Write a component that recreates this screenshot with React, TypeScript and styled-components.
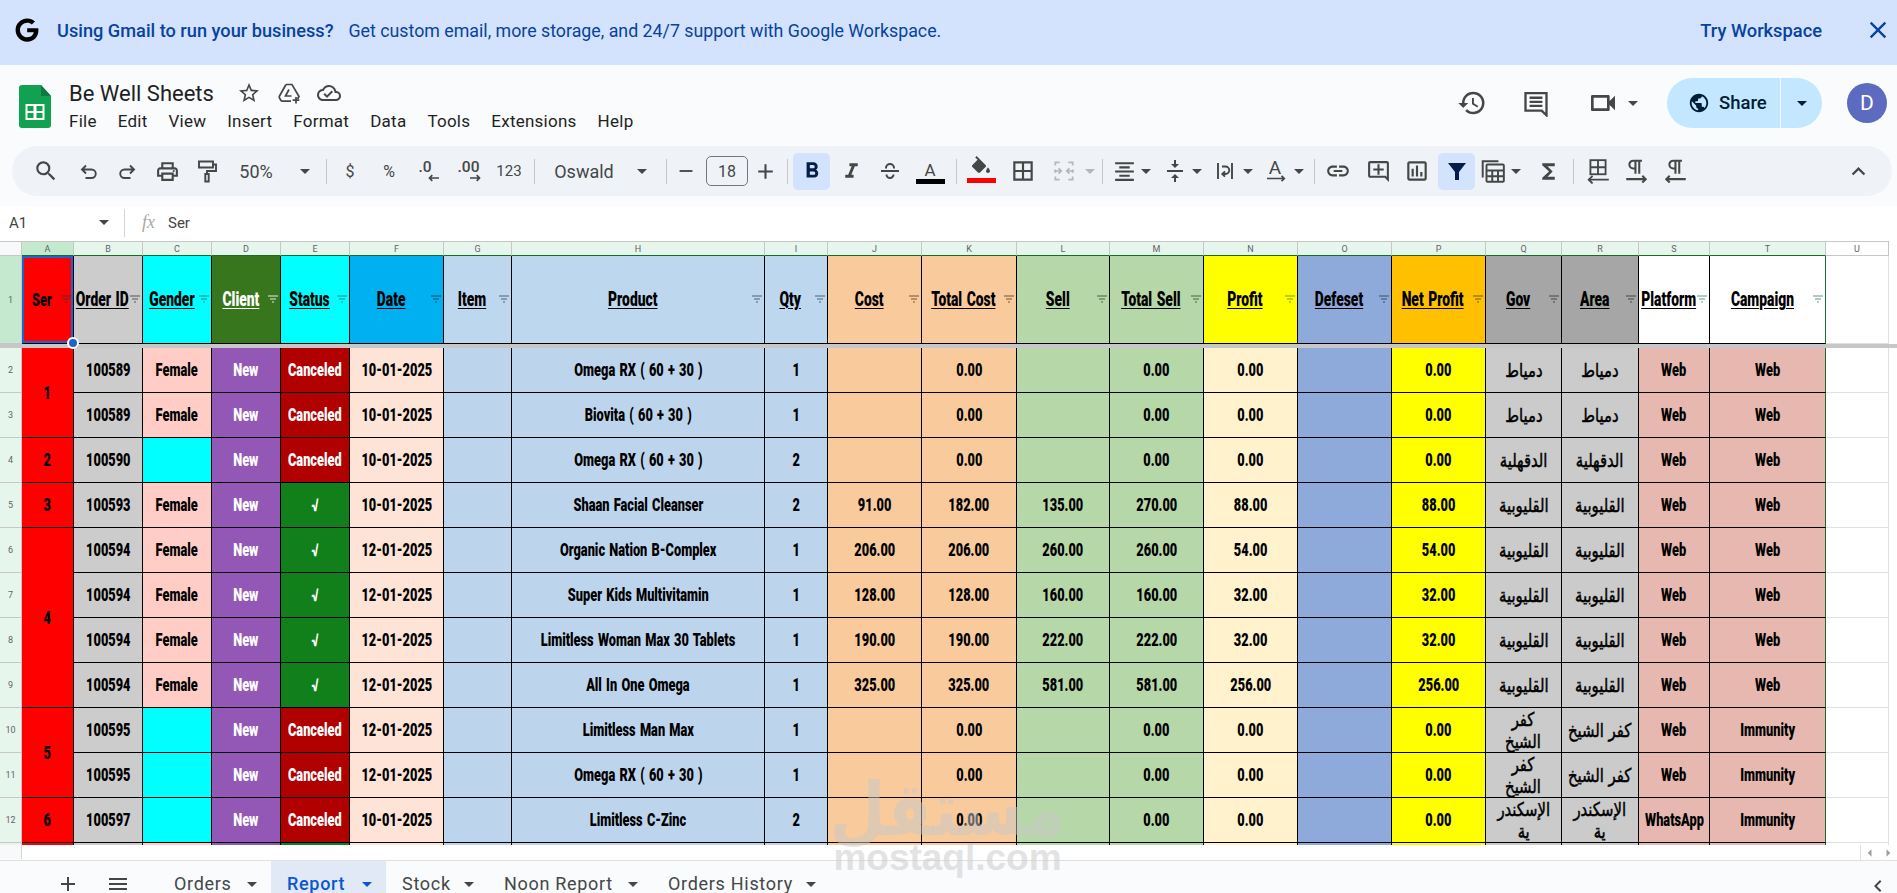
import React from "react";
import styled, { createGlobalStyle } from "styled-components";
import { FaGoogle } from "react-icons/fa";
import {
  MdAdd, MdMenu, MdClose, MdSearch, MdOutlinePrint,
  MdRemove, MdFormatBold, MdFormatItalic, MdBorderAll, MdFormatAlignCenter,
  MdVerticalAlignCenter, MdLink, MdOutlineAddComment, MdOutlineInsertChart, MdFunctions,
  MdExpandLess, MdStarBorder,
  MdOutlineCloudDone, MdHistory, MdOutlineVideocam, MdPublic,
  MdChevronLeft, MdArrowLeft, MdArrowRight,
} from "react-icons/md";

const Global = createGlobalStyle`
  html, body { margin: 0; padding: 0; width: 1897px; height: 893px; overflow: hidden; background: #fff; }
  * { box-sizing: border-box; }
`;

const UI = `Roboto, "Liberation Sans", sans-serif`;

const Page = styled.div`
  position: relative; width: 1897px; height: 893px; overflow: hidden;
  display: flex; flex-direction: column; background: #f9fbfd; font-family: ${UI}; color: #444746;
`;

/* banner */
const Banner = styled.div`
  height: 65px; flex: none; background: #d3e3fd; color: #0842a0; display: flex; align-items: center;
  padding: 0 10px 5px 15px; font-size: 17.8px;
`;
const BannerLead = styled.span` margin-left: 18px; font-size: 18.2px; font-weight: 500; `;
const BannerRest = styled.span` margin-left: 15px; `;
const BannerCta = styled.span` margin-left: auto; font-size: 18.3px; font-weight: 500; `;
const BannerClose = styled.span` display: flex; margin-left: 42px; margin-right: -5px; `;

/* header */
const Header = styled.div` height: 81px; flex: none; display: flex; padding: 20px 10px 0 19px; `;
const TitleBlock = styled.div` margin-left: 18px; margin-top: -5px; display: flex; flex-direction: column; `;
const TitleRow = styled.div` display: flex; align-items: center; height: 26px; color: #444746; `;
const DocTitle = styled.span` font-size: 22px; color: #1f1f1f; width: 146px; white-space: nowrap; `;
const TitleIcon = styled.span<{ $ml: number }>` display: flex; margin-left: ${(p) => p.$ml}px; `;
const Menu = styled.div` display: flex; gap: 21px; margin-top: 5px; font-size: 17px; color: #1f1f1f; letter-spacing: .25px; `;
const HeaderRight = styled.div` margin-left: auto; margin-top: -7px; height: 50px; display: flex; align-items: center; `;
const HeadIcon = styled.span<{ $ml: number }>` display: flex; margin-left: ${(p) => p.$ml}px; color: #444746; `;
const Share = styled.div`
  margin-left: 29px; width: 155px; height: 50px; border-radius: 25px; background: #c2e7ff; color: #001d35;
  display: flex; align-items: center; font-size: 18.5px; font-weight: 500;
`;
const ShareMain = styled.div` width: 114px; height: 100%; display: flex; align-items: center; gap: 9px; padding-left: 21px; border-right: 1px solid #f3faff; `;
const Avatar = styled.div`
  margin-left: 25px; width: 40px; height: 40px; border-radius: 50%; background: #5c6bc0; color: #fff;
  display: flex; align-items: center; justify-content: center; font-size: 21px;
`;
const Caret = styled.span<{ $c?: string; $s?: number }>`
  display: inline-block; flex: none; width: 0; height: 0;
  border-left: ${(p) => p.$s ?? 5}px solid transparent; border-right: ${(p) => p.$s ?? 5}px solid transparent;
  border-top: ${(p) => p.$s ?? 5}px solid ${(p) => p.$c ?? "#444746"};
`;

/* toolbar */
const ToolbarWrap = styled.div` height: 60px; flex: none; padding: 0 5px 10px 12px; `;
const Toolbar = styled.div` height: 50px; border-radius: 25px; background: #eff3f8; display: flex; align-items: center; `;
const Tool = styled.div<{ $w: number; $ml: number; $on?: boolean; $text?: number }>`
  flex: none; position: relative; width: ${(p) => p.$w}px; height: 37px; margin-left: ${(p) => p.$ml}px;
  display: flex; flex-direction: column; align-items: center; justify-content: center; border-radius: 5px;
  color: ${(p) => (p.$on ? "#041e49" : "#444746")}; background: ${(p) => (p.$on ? "#d3e3fd" : "transparent")};
  font-size: ${(p) => p.$text ?? 16}px; white-space: nowrap;
`;
const Sep = styled.div` width: 1px; height: 25px; background: #c7c7c7; `;
const SizeBox = styled.div` width: 42px; height: 30px; border: 1px solid #747775; border-radius: 5px; display: flex; align-items: center; justify-content: center; font-size: 16px; color: #444746; `;
const ColorBar = styled.div<{ $c: string }>` width: 29px; height: 5px; margin-top: -1px; background: ${(p) => p.$c}; `;
const GlyphA = styled.span` font-size: 17px; line-height: 19px; margin-top: 3px; `;
const FillSvg = styled.svg` margin-top: -4px; `;
const LogoSvg = styled.svg` flex: none; `;

/* formula bar */
const FormulaBar = styled.div` height: 35px; flex: none; background: #fff; display: flex; align-items: center; padding: 0 0 2px 9px; font-size: 15px; color: #444; `;
const NameBox = styled.div` width: 116px; height: 28px; display: flex; align-items: center; justify-content: space-between; padding-right: 15px; border-right: 1px solid #d5d5d5; `;
const Fx = styled.span` margin-left: 17px; font: italic 18px "Liberation Serif", serif; color: #a8a8a8; `;
const FormulaText = styled.span` margin-left: 13px; `;

/* sheet */
const Sheet = styled.div`
  height: 604px; flex: none; background: #fff; overflow: hidden; display: grid;
  grid-template-columns: 22px 52px 69px 69px 69px 69px 94px 68px 253px 63px 94px 95px 93px 94px 94px 94px 94px 76px 77px 71px 116px 63px 1fr;
  grid-template-rows: 15px 88px 4px repeat(12, 45px);
`;
const Corner = styled.div` background: #f8f9fa; border-top: 1px solid #c7c7c7; border-right: 1px solid #c7c7c7; border-bottom: 1px solid #c7c7c7; `;
const ColHead = styled.div<{ $on?: boolean; $plain?: boolean }>`
  background: ${(p) => (p.$plain ? "#fff" : p.$on ? "#c4e9cf" : "#e7f6ec")};
  border-top: 1px solid #c7c7c7; border-right: 1px solid #c7c7c7;
  border-bottom: 1px solid ${(p) => (p.$plain ? "#c7c7c7" : "#146c2e")};
  display: flex; align-items: center; justify-content: center;
  font: 9px ${UI}; color: #5f6368;
`;
const RowHead = styled.div<{ $on?: boolean }>`
  background: ${(p) => (p.$on ? "#c4e9cf" : "#e7f6ec")}; border-right: 1px solid #c7c7c7; border-bottom: 1px solid #c7c7c7;
  display: flex; align-items: center; justify-content: center; font: 9px ${UI}; color: #5f6368;
`;
const Band = styled.div` grid-column: 1 / -1; background: #c7c7c7; `;
const Cell = styled.div<{ $bg: string; $fg?: string; $edge?: boolean; $span?: number; $head?: boolean; $sel?: boolean }>`
  position: relative; background: ${(p) => p.$bg}; color: ${(p) => p.$fg ?? "#000"};
  border-right: 1px solid ${(p) => (p.$edge ? "#146c2e" : "#000")};
  border-bottom: 1px solid #000;
  grid-row: span ${(p) => p.$span ?? 1};
  display: flex; align-items: center; justify-content: center;
  padding: ${(p) => (p.$head ? "1px 11px 0 0" : "0")};
  box-shadow: ${(p) => (p.$sel ? "inset 0 0 0 2px #1a66d0" : "none")};
  z-index: ${(p) => (p.$sel ? 2 : 0)};
`;
const Blank = styled.div` border-right: 1px solid #e0e0e0; border-bottom: 1px solid #e0e0e0; background: #fff; `;
const Filler = styled.div` background: #fff; `;
const Txt = styled.span<{ $u?: boolean }>`
  display: inline-block; flex: none; font: 900 ${(p) => (p.$u ? 19.5 : 18)}px/20px Roboto, sans-serif; white-space: nowrap;
  word-spacing: 1.5px; transform: scaleX(.71); text-decoration: ${(p) => (p.$u ? "underline" : "none")}; text-underline-offset: 2px;
`;
const Arabic = styled.span`
  display: inline-block; flex: none; direction: rtl; text-align: center; white-space: pre-line;
  font: 400 19px/22px "DejaVu Sans", sans-serif; transform: scaleX(.78); -webkit-text-stroke: .5px #000;
`;
const FilterMark = styled.svg` position: absolute; right: 2px; top: 39px; width: 10px; height: 8px; `;
const Handle = styled.div`
  position: absolute; right: -6px; bottom: -6px; width: 12px; height: 12px; border-radius: 50%;
  background: #1a66d0; border: 2px solid #fff;
`;

/* scroll strip + tabs */
const Strip = styled.div` height: 16px; flex: none; background: #fff; display: flex; justify-content: space-between; border-bottom: 1px solid #e0e0e0; `;
const StripGutter = styled.div` width: 22px; height: 14px; border-right: 1px solid #d5d5d5; background: #f8f9fa; `;
const StripArrows = styled.div` width: 37px; display: flex; align-items: center; border-left: 1px solid #e0e0e0; color: #9aa0a6; `;
const TabBar = styled.div` height: 32px; flex: none; overflow: hidden; display: flex; align-items: flex-start; background: #f9fbfd; padding-left: 43px; `;
const TabTool = styled.span<{ $w: number }>` flex: none; width: ${(p) => p.$w}px; display: flex; justify-content: center; padding-top: 11px; color: #444746; `;
const Tab = styled.div<{ $w: number; $on?: boolean; $ml?: number }>`
  flex: none; width: ${(p) => p.$w}px; height: 32px; margin-left: ${(p) => p.$ml ?? 0}px; padding: 12px 14px 0 16px; display: flex; justify-content: space-between;
  background: ${(p) => (p.$on ? "#e1e9f7" : "transparent")}; color: ${(p) => (p.$on ? "#0b57d0" : "#444746")};
  font-size: 18px; line-height: 22px; font-weight: ${(p) => (p.$on ? 500 : 400)}; letter-spacing: .7px;
  white-space: nowrap;
`;
const TabCaret = styled.span` display: flex; align-items: center; height: 22px; `;
const SideCollapse = styled.span` margin-left: auto; margin-right: 7px; padding-top: 13px; display: flex; color: #444746; `;

/* watermark */
const Watermark = styled.div`
  position: absolute; left: 833px; top: 769px; width: 229px; display: flex; flex-direction: column; align-items: center;
  color: rgba(200, 200, 200, .5); pointer-events: none; z-index: 5;
`;
const WatermarkAr = styled.span` font: 700 74px/80px "DejaVu Sans", sans-serif; white-space: nowrap; transform: scaleX(.87); `;
const WatermarkEn = styled.span` font: 700 37px/40px "Liberation Sans", sans-serif; margin-top: -11px; `;

/* small drawings */
const S = (p: { children: React.ReactNode; size?: number; sw?: number; c?: string }) => (
  <svg width={p.size ?? 24} height={p.size ?? 24} viewBox="0 0 24 24" fill="none" stroke={p.c ?? "currentColor"} strokeWidth={p.sw ?? 2}>
    {p.children}
  </svg>
);
const SheetsLogo = () => (
  <LogoSvg width="32" height="43" viewBox="0 0 32 43">
    <path d="M3 0h19l10 11v29a3 3 0 0 1-3 3H3a3 3 0 0 1-3-3V3a3 3 0 0 1 3-3z" fill="#12a150" />
    <path d="M22 0l10 11H22z" fill="#0c7a3c" />
    <rect x="6.5" y="19" width="19" height="16" fill="#fff" />
    <path d="M8.5 21h6v5h-6zM17.500 21h6v5h-6zM8.500 28h6v5h-6zM17.500 28h6v5h-6z" fill="#12a150" />
  </LogoSvg>
);
const CommentIcon = () => (
  <S size={28}>
    <path d="M3 3.5h18v19l-4.2-4H3z" />
    <path d="M6.5 7.5h11M6.5 11h11M6.5 14.5h11" />
  </S>
);
const DriveAddIcon = () => (
  <S sw={1.7}>
    <path d="M9 3.500h6l7 12-1.500 2.500M9 3.500 2.500 15a2 2 0 0 0 0 2l1.500 2.500a1.500 1.500 0 0 0 1.300.700H14" />
    <path d="M12 8.500 8.500 15h6" />
    <path d="M19 16v6.500M15.700 19.200h6.600" />
  </S>
);
const UndoIcon = () => (
  <S sw={1.9}><path d="M9 6.500 5 10.500l4 4M5 10.500h9.500a4.250 4.250 0 0 1 0 8.500H8.500" /></S>
);
const RedoIcon = () => (
  <S sw={1.9}><path d="M15 6.500l4 4-4 4M19 10.500H9.500a4.250 4.250 0 0 0 0 8.500H15.500" /></S>
);
const PaintIcon = () => (
  <S sw={1.9}>
    <path d="M4 2.500h14v6H4z" />
    <path d="M18 5.500h3v6.500h-9v3" />
    <path d="M10.300 15h3.400v7.500h-3.400z" />
  </S>
);
const StrikeIcon = () => (
  <S sw={2}>
    <path d="M3 12h18" />
    <path d="M8 9.500V9a4 4 0 0 1 8 0v.500" />
    <path d="M8.500 15.500a3.500 3.500 0 0 0 7 0" />
  </S>
);
const DecIcon = (p: { label: string; tx: number; dir: "l" | "r" }) => (
  <svg width="30" height="28" viewBox="0 0 30 28">
    <text x={p.tx} y="15" textAnchor="middle" fontFamily="Roboto, sans-serif" fontWeight="500" fontSize="15.500" fill="currentColor">{p.label}</text>
    {p.dir === "l"
      ? <path d="M24 21h-9.500m2.800-2.800-2.800 2.800 2.800 2.800" fill="none" stroke="currentColor" strokeWidth="1.7" />
      : <path d="M15 21h9.500m-2.800-2.800 2.800 2.800-2.800 2.800" fill="none" stroke="currentColor" strokeWidth="1.7" />}
  </svg>
);
const MergeIcon = () => (
  <S sw={1.6} c="#b3b7bb" size={26}>
    <path d="M8 4H4v3M4 10.500v3M4 17v3h4M16 4h4v3M20 10.500v3M20 17v3h-4" />
    <path d="M3 12h6.500M7 9.500 9.500 12 7 14.500M21 12h-6.500M17 9.500 14.500 12l2.500 2.500" />
  </S>
);
const WrapIcon = () => (
  <S sw={1.9}>
    <path d="M5 4v16M19 4v16" />
    <path d="M9 7.500h3.500a3.500 3.500 0 0 1 0 7.500H9.500M12 12.300 9.300 15l2.700 2.700" />
  </S>
);
const RotateIcon = () => (
  <svg width="26" height="26" viewBox="0 0 26 26">
    <text x="11" y="16" textAnchor="middle" fontFamily="Roboto, sans-serif" fontSize="19" fill="currentColor">A</text>
    <path d="M3 20.500h17M17.500 17.800l2.800 2.700-2.800 2.700" fill="none" stroke="currentColor" strokeWidth="1.7" />
  </svg>
);
const FillIcon = () => (
  <FillSvg width="24" height="24" viewBox="0 0 24 22" fill="currentColor">
    <path d="M16.560 8.940 7.620 0 6.210 1.410l2.380 2.380-5.150 5.150c-.59.590-.59 1.540 0 2.120l5.500 5.500c.29.290.68.440 1.060.440s.77-.150 1.060-.440l5.500-5.500c.59-.580.59-1.530 0-2.120zM19 11.500s-2 2.170-2 3.500c0 1.100.9 2 2 2s2-.9 2-2c0-1.330-2-3.500-2-3.500z" />
  </FillSvg>
);
const FunnelIcon = () => (
  <svg width="24" height="24" viewBox="0 0 24 24" fill="#041e49"><path d="M3 4h18l-7 9v8h-4v-8z" /></svg>
);
const CalcIcon = () => (
  <S sw={1.8} size={26}>
    <path d="M2.500 18V3H17" />
    <rect x="6" y="6" width="16" height="16" rx="1" />
    <path d="M6 11.500h16M6 16.800h16M11.300 11.500V22M16.600 11.500V22" />
  </S>
);
const TableArrowIcon = () => (
  <S sw={1.7} size={26}>
    <rect x="5" y="2" width="14" height="13" />
    <path d="M12 2v13M5 8.500h14M22 20H3M7 16.500 3.400 20 7 23.500" />
  </S>
);
const PilcrowRight = () => (
  <S sw={1.9} size={26}>
    <path d="M11.500 2.500v12M15 2.500v12M17.500 2.500h-8a3.600 3.600 0 0 0 0 7.200h2" />
    <path d="M3 19.500h18M17.800 16.300l3.200 3.200-3.200 3.200" />
  </S>
);
const PilcrowLeft = () => (
  <S sw={1.9} size={26}>
    <path d="M11.500 2.500v12M15 2.500v12M17.500 2.500h-8a3.600 3.600 0 0 0 0 7.200h2" />
    <path d="M21 19.500H3M6.200 16.300 3 19.500l3.200 3.200" />
  </S>
);
const FilterLines = (p: { c: string }) => (
  <FilterMark viewBox="0 0 10 8"><path d="M0 1h10M2 4h6M4 7h2" stroke={p.c} strokeWidth="1" /></FilterMark>
);

/* toolbar data: c = centre x of the tool on the page */
type T = { c: number; w?: number; el?: React.ReactNode; on?: boolean; text?: number };
const car = <Caret />;
const tools: T[] = [
  { c: 46, el: <MdSearch size={26} /> },
  { c: 89, el: <UndoIcon /> },
  { c: 127, el: <RedoIcon /> },
  { c: 167, el: <MdOutlinePrint size={25} /> },
  { c: 207, el: <PaintIcon /> },
  { c: 256, w: 40, el: "50%", text: 18 },
  { c: 305, w: 14, el: car },
  { c: 326, w: 1, el: <Sep /> },
  { c: 350, el: "$", text: 16 },
  { c: 389, el: "%", text: 16 },
  { c: 430, el: <DecIcon label=".0" tx={10} dir="l" /> },
  { c: 470, el: <DecIcon label=".00" tx={13.5} dir="r" /> },
  { c: 509, el: "123", text: 15 },
  { c: 534, w: 1, el: <Sep /> },
  { c: 584, w: 64, el: "Oswald", text: 18 },
  { c: 642, w: 14, el: car },
  { c: 666, w: 1, el: <Sep /> },
  { c: 686, w: 24, el: <MdRemove size={22} /> },
  { c: 727, w: 42, el: <SizeBox>18</SizeBox> },
  { c: 765, el: <MdAdd size={25} /> },
  { c: 787, w: 1, el: <Sep /> },
  { c: 811.5, w: 37, el: <MdFormatBold size={26} />, on: true },
  { c: 851, el: <MdFormatItalic size={25} /> },
  { c: 890, el: <StrikeIcon /> },
  { c: 930, el: <><GlyphA>A</GlyphA><ColorBar $c="#000" /></> },
  { c: 956, w: 1, el: <Sep /> },
  { c: 981, el: <><FillIcon /><ColorBar $c="#f00" /></> },
  { c: 1023, el: <MdBorderAll size={26} /> },
  { c: 1064, el: <MergeIcon /> },
  { c: 1090, w: 14, el: <Caret $c="#b3b7bb" /> },
  { c: 1102, w: 1, el: <Sep /> },
  { c: 1124, el: <MdFormatAlignCenter size={25} /> },
  { c: 1146, w: 14, el: car },
  { c: 1175, el: <MdVerticalAlignCenter size={24} /> },
  { c: 1197, w: 14, el: car },
  { c: 1225, el: <WrapIcon /> },
  { c: 1248, w: 14, el: car },
  { c: 1277, el: <RotateIcon /> },
  { c: 1299, w: 14, el: car },
  { c: 1314, w: 1, el: <Sep /> },
  { c: 1338, el: <MdLink size={26} /> },
  { c: 1378, el: <MdOutlineAddComment size={25} /> },
  { c: 1417, el: <MdOutlineInsertChart size={26} /> },
  { c: 1456.5, w: 37, el: <FunnelIcon />, on: true },
  { c: 1493, el: <CalcIcon /> },
  { c: 1516, w: 14, el: car },
  { c: 1548, el: <MdFunctions size={25} /> },
  { c: 1573, w: 1, el: <Sep /> },
  { c: 1598, el: <TableArrowIcon /> },
  { c: 1636, el: <PilcrowRight /> },
  { c: 1676, el: <PilcrowLeft /> },
  { c: 1858, el: <MdExpandLess size={27} /> },
];

/* sheet data */
const letters = "ABCDEFGHIJKLMNOPQRST".split("");
const headers: { t: string; bg: string; fg?: string; f?: string }[] = [
  { t: "Ser", bg: "#f00", f: "#5a2a2a" },
  { t: "Order ID", bg: "#cdcccc", f: "#555" },
  { t: "Gender", bg: "#0ff", f: "#1a8a8a" },
  { t: "Client", bg: "#38761d", fg: "#fff", f: "#e6efe0" },
  { t: "Status", bg: "#0ff", f: "#1a8a8a" },
  { t: "Date", bg: "#00b0f0", f: "#124a66" },
  { t: "Item", bg: "#bdd7ee", f: "#4d6373" },
  { t: "Product", bg: "#bdd7ee", f: "#4d6373" },
  { t: "Qty", bg: "#bdd7ee", f: "#4d6373" },
  { t: "Cost", bg: "#f9cb9c", f: "#6b5540" },
  { t: "Total Cost", bg: "#f9cb9c", f: "#6b5540" },
  { t: "Sell", bg: "#b6d7a8", f: "#3d6b3d" },
  { t: "Total Sell", bg: "#b6d7a8", f: "#3d6b3d" },
  { t: "Profit", bg: "#ff0", f: "#7a9a1a" },
  { t: "Defeset", bg: "#8eaadb", f: "#3b4a66" },
  { t: "Net Profit", bg: "#ffc000", f: "#6b5a10" },
  { t: "Gov", bg: "#a6a6a6", f: "#444" },
  { t: "Area", bg: "#a6a6a6", f: "#444" },
  { t: "Platform", bg: "#fff", f: "#5a9a80" },
  { t: "Campaign", bg: "#fff", f: "#5a9a80" },
];
type R = string[];
const O = "Omega RX ( 60 + 30 )";
const D1 = "10-01-2025", D2 = "12-01-2025", X = "Canceled", V = "√";
const Q = "القليوبية", DM = "دمياط", DQ = "الدقهلية", KF = "كفر الشيخ", IS = "الإسكندر\nية";
const rows: R[] = [
  ["100589", "Female", X, D1, O, "1", "", "0.00", "", "0.00", "0.00", "0.00", DM, DM, "Web", "Web"],
  ["100589", "Female", X, D1, "Biovita ( 60 + 30 )", "1", "", "0.00", "", "0.00", "0.00", "0.00", DM, DM, "Web", "Web"],
  ["100590", "", X, D1, O, "2", "", "0.00", "", "0.00", "0.00", "0.00", DQ, DQ, "Web", "Web"],
  ["100593", "Female", V, D1, "Shaan Facial Cleanser", "2", "91.00", "182.00", "135.00", "270.00", "88.00", "88.00", Q, Q, "Web", "Web"],
  ["100594", "Female", V, D2, "Organic Nation B-Complex", "1", "206.00", "206.00", "260.00", "260.00", "54.00", "54.00", Q, Q, "Web", "Web"],
  ["100594", "Female", V, D2, "Super Kids Multivitamin", "1", "128.00", "128.00", "160.00", "160.00", "32.00", "32.00", Q, Q, "Web", "Web"],
  ["100594", "Female", V, D2, "Limitless Woman Max 30 Tablets", "1", "190.00", "190.00", "222.00", "222.00", "32.00", "32.00", Q, Q, "Web", "Web"],
  ["100594", "Female", V, D2, "All In One Omega", "1", "325.00", "325.00", "581.00", "581.00", "256.00", "256.00", Q, Q, "Web", "Web"],
  ["100595", "", X, D2, "Limitless Man Max", "1", "", "0.00", "", "0.00", "0.00", "0.00", "كفر\nالشيخ", KF, "Web", "Immunity"],
  ["100595", "", X, D2, O, "1", "", "0.00", "", "0.00", "0.00", "0.00", "كفر\nالشيخ", KF, "Web", "Immunity"],
  ["100597", "", X, D1, "Limitless C-Zinc", "2", "", "0.00", "", "0.00", "0.00", "0.00", IS, IS, "WhatsApp", "Immunity"],
  ["", "Female", "", "", "", "", "", "", "", "", "", "", "", "", "", ""],
];
const ser: Record<number, [string, number]> = { 0: ["1", 2], 2: ["2", 1], 3: ["3", 1], 4: ["4", 4], 8: ["5", 2], 10: ["6", 1], 11: ["", 1] };

const BodyRow = ({ r, i }: { r: R; i: number }) => {
  const [id, g, st, date, prod, qty, cost, tc, sell, ts, pr, np, gov, area, pf, camp] = r;
  const tx = (s: string) => (s ? <Txt>{s}</Txt> : null);
  const ar = (s: string) => (s ? <Arabic>{s}</Arabic> : null);
  const last = i === 11;
  return (
    <>
      <RowHead>{last ? "" : i + 2}</RowHead>
      {ser[i] && <Cell $bg="#f00" $span={ser[i][1]}>{tx(ser[i][0])}</Cell>}
      <Cell $bg="#cdcccc">{tx(id)}</Cell>
      <Cell $bg={g ? "#ffcdc6" : "#0ff"}>{last ? null : tx(g)}</Cell>
      <Cell $bg="#9358b6" $fg="#fff">{last ? null : tx("New")}</Cell>
      <Cell $bg={st === V || last ? "#11801a" : "#b00000"} $fg="#fff">{tx(st)}</Cell>
      <Cell $bg="#fde4d6">{tx(date)}</Cell>
      <Cell $bg="#bdd5ec" />
      <Cell $bg="#bdd5ec">{tx(prod)}</Cell>
      <Cell $bg="#bdd5ec">{tx(qty)}</Cell>
      <Cell $bg="#f9cb9c">{tx(cost)}</Cell>
      <Cell $bg="#f9cb9c">{tx(tc)}</Cell>
      <Cell $bg="#b6d7a8">{tx(sell)}</Cell>
      <Cell $bg="#b6d7a8">{tx(ts)}</Cell>
      <Cell $bg="#fff2cc">{tx(pr)}</Cell>
      <Cell $bg="#8eaadb" />
      <Cell $bg="#ff0">{tx(np)}</Cell>
      <Cell $bg="#cbcbcb">{ar(gov)}</Cell>
      <Cell $bg="#cbcbcb">{ar(area)}</Cell>
      <Cell $bg="#e6b8af">{tx(pf)}</Cell>
      <Cell $bg="#e6b8af" $edge>{tx(camp)}</Cell>
      <Blank />
      <Filler />
    </>
  );
};

export default function App() {
  let cursor = 12;
  return (
    <Page>
      <Global />
      <Banner>
        <FaGoogle size={24} color="#000" />
        <BannerLead>Using Gmail to run your business?</BannerLead>
        <BannerRest>Get custom email, more storage, and 24/7 support with Google Workspace.</BannerRest>
        <BannerCta>Try Workspace</BannerCta>
        <BannerClose><MdClose size={28} /></BannerClose>
      </Banner>

      <Header>
        <SheetsLogo />
        <TitleBlock>
          <TitleRow>
            <DocTitle>Be Well Sheets</DocTitle>
            <TitleIcon $ml={22}><MdStarBorder size={24} /></TitleIcon>
            <TitleIcon $ml={16}><DriveAddIcon /></TitleIcon>
            <TitleIcon $ml={16}><MdOutlineCloudDone size={24} /></TitleIcon>
          </TitleRow>
          <Menu>
            {["File", "Edit", "View", "Insert", "Format", "Data", "Tools", "Extensions", "Help"].map((m) => <span key={m}>{m}</span>)}
          </Menu>
        </TitleBlock>
        <HeaderRight>
          <HeadIcon $ml={0}><MdHistory size={30} /></HeadIcon>
          <HeadIcon $ml={35}><CommentIcon /></HeadIcon>
          <HeadIcon $ml={37}><MdOutlineVideocam size={32} /></HeadIcon>
          <HeadIcon $ml={9}><Caret /></HeadIcon>
          <Share>
            <ShareMain><MdPublic size={22} />Share</ShareMain>
            <HeadIcon $ml={16}><Caret $c="#001d35" /></HeadIcon>
          </Share>
          <Avatar>D</Avatar>
        </HeaderRight>
      </Header>

      <ToolbarWrap>
        <Toolbar>
          {tools.map((t, i) => {
            const w = t.w ?? 30;
            const ml = t.c - w / 2 - cursor;
            cursor = t.c + w / 2;
            return <Tool key={i} $w={w} $ml={ml} $on={t.on} $text={t.text}>{t.el}</Tool>;
          })}
        </Toolbar>
      </ToolbarWrap>

      <FormulaBar>
        <NameBox>A1<Caret /></NameBox>
        <Fx>fx</Fx>
        <FormulaText>Ser</FormulaText>
      </FormulaBar>

      <Sheet>
        <Corner />
        {letters.map((l, i) => <ColHead key={l} $on={i === 0}>{l}</ColHead>)}
        <ColHead $plain>U</ColHead>
        <Filler />

        <RowHead $on>1</RowHead>
        {headers.map((h, i) => (
          <Cell key={h.t} $bg={h.bg} $fg={h.fg} $head $sel={i === 0} $edge={i === 19}>
            <Txt $u={i > 0}>{h.t}</Txt>
            <FilterLines c={h.f ?? "#555"} />
            {i === 0 && <Handle />}
          </Cell>
        ))}
        <Blank />
        <Filler />

        <Band />

        {rows.map((r, i) => <BodyRow key={i} r={r} i={i} />)}
      </Sheet>

      <Strip>
        <StripGutter />
        <StripArrows><MdArrowLeft size={18} /><MdArrowRight size={18} /></StripArrows>
      </Strip>

      <TabBar>
        <TabTool $w={50}><MdAdd size={24} /></TabTool>
        <TabTool $w={50}><MdMenu size={24} /></TabTool>
        <Tab $w={113} $ml={15}>Orders<TabCaret><Caret /></TabCaret></Tab>
        <Tab $w={115} $on>Report<TabCaret><Caret $c="#0b57d0" /></TabCaret></Tab>
        <Tab $w={102}>Stock<TabCaret><Caret /></TabCaret></Tab>
        <Tab $w={164}>Noon Report<TabCaret><Caret /></TabCaret></Tab>
        <Tab $w={178}>Orders History<TabCaret><Caret /></TabCaret></Tab>
        <SideCollapse><MdChevronLeft size={24} /></SideCollapse>
      </TabBar>

      <Watermark>
        <WatermarkAr>مستقل</WatermarkAr>
        <WatermarkEn>mostaql.com</WatermarkEn>
      </Watermark>
    </Page>
  );
}
